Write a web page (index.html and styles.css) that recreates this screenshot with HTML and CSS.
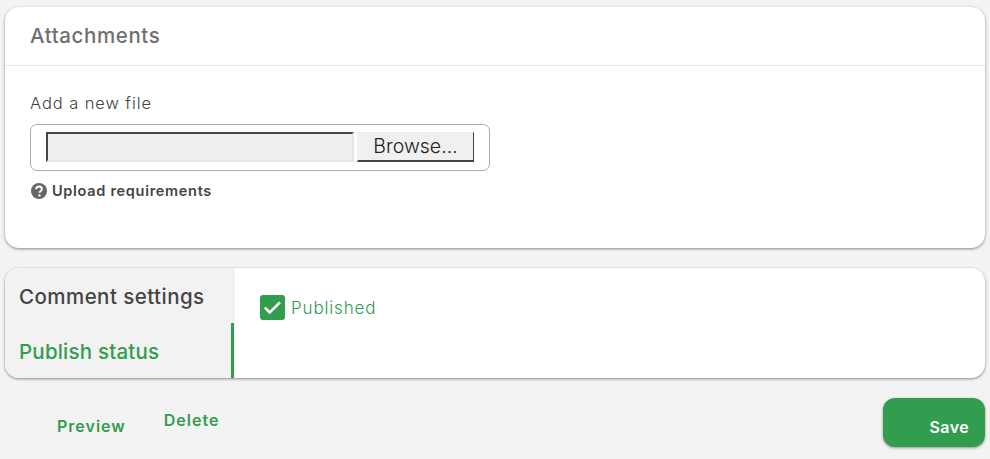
FILE: index.html
```html
<!DOCTYPE html>
<html lang="en">
<head>
<meta charset="utf-8">
<title>Attachments</title>
<link rel="stylesheet" href="styles.css">
</head>
<body>
<section class="card attachments">
  <h2 class="card-title">Attachments</h2>
  <div class="card-body">
    <label class="field-label">Add a new file</label>
    <div class="file-box">
      <span class="file-path"></span>
      <button class="browse" type="button">Browse...</button>
    </div>
    <div class="requirements">
      <svg class="help-icon" viewBox="0 0 16 16" aria-hidden="true">
        <circle cx="8" cy="8" r="8" fill="#666"/>
        <path d="M5.2 6.2C5.3 4.5 6.5 3.5 8 3.5c1.7 0 2.9 1 2.9 2.5 0 1.1-.7 1.7-1.4 2.2-.7.4-1 .8-1 1.6" fill="none" stroke="#fff" stroke-width="1.9"/>
        <circle cx="8.4" cy="12.4" r="1.2" fill="#fff"/>
      </svg>
      <span>Upload requirements</span>
    </div>
  </div>
</section>
<section class="card settings">
  <nav class="tabs">
    <div class="tab">Comment settings</div>
    <div class="tab tab-active">Publish status</div>
  </nav>
  <div class="tab-panel">
    <span class="checkbox">
      <svg viewBox="0 0 25 25" aria-hidden="true"><path d="M4.8 12.6l4.9 4.9L20 7.4" fill="none" stroke="#fff" stroke-width="2.6"/></svg>
    </span>
    <span class="check-label">Published</span>
  </div>
</section>
<footer class="actions">
  <a class="link link-preview">Preview</a>
  <a class="link link-delete">Delete</a>
  <button class="save" type="button">Save</button>
</footer>
</body>
</html>
```
FILE: styles.css
```css
* { box-sizing: border-box; }
html, body { margin: 0; height: 459px; overflow: hidden; }
body {
  background: #f3f3f3;
  padding: 7px 5px 0;
  font-family: Inter, "Open Sans", sans-serif;
  color: #444;
}
.card {
  background: #fff;
  border-radius: 14px;
  box-shadow: 0 1px 3px rgba(0,0,0,.45);
}
.attachments { height: 241px; }
.card-title {
  margin: 0;
  height: 59px;
  padding: 16px 25px 0;
  border-bottom: 1px solid #e6e6e6;
  font-size: 20.5px;
  line-height: 25px;
  font-weight: 500;
  letter-spacing: .6px;
  color: #707070;
}
.card-body { padding: 27px 25px 0; }
.field-label {
  display: block;
  font-size: 16.5px;
  line-height: 20px;
  font-weight: 300;
  color: #444;
  margin-bottom: 11px;
  letter-spacing: .9px;
}
.file-box {
  width: 460px;
  height: 47px;
  border: 1px solid #aaa;
  border-radius: 7px;
  padding: 7px 15px;
  display: flex;
  gap: 3px;
}
.file-path {
  width: 308px;
  height: 30px;
  background: #efefef;
  border-style: solid;
  border-width: 2px;
  border-color: #444 #e4e4e4 #e4e4e4 #444;
}
.browse {
  width: 117px;
  height: 30px;
  padding: 0 0 2px;
  background: #f0f0f0;
  border-style: solid;
  border-width: 1px 1px 2px 1px;
  border-color: #f0f0f0 #444 #444 #f0f0f0;
  font: 300 19.5px/26px Inter, sans-serif;
  color: #222;
}
.requirements {
  display: flex;
  align-items: center;
  gap: 5px;
  margin-top: 11px;
  margin-left: 1px;
  font-size: 14.5px;
  line-height: 18px;
  font-weight: 600;
  letter-spacing: .7px;
  color: #444;
}
.help-icon { width: 16px; height: 16px; }
.settings {
  height: 110px;
  margin-top: 20px;
  display: flex;
  overflow: hidden;
}
.tabs { width: 230px; background: #f2f2f2; }
.tab {
  width: 229px;
  height: 55px;
  padding: 16px 14px 0;
  font-size: 20.5px;
  line-height: 25px;
  font-weight: 500;
  letter-spacing: .45px;
  color: #444;
}
.tab-active {
  color: #329c4f;
  border-right: 3px solid #329c4f;
  letter-spacing: .2px;
}
.tab-panel {
  flex: 1;
  display: flex;
  align-items: flex-start;
  gap: 6px;
  padding: 27px 25px 0;
}
.checkbox {
  width: 25px;
  height: 25px;
  background: #329c4f;
  border-radius: 3px;
  display: block;
}
.checkbox svg { display: block; width: 25px; height: 25px; }
.check-label {
  font-size: 17px;
  line-height: 25px;
  font-weight: 300;
  color: #329c4f;
  letter-spacing: .85px;
  padding-top: 1px;
}
.actions {
  display: flex;
  align-items: flex-start;
  margin-top: 20px;
}
.link {
  font-size: 16px;
  line-height: 20px;
  font-weight: 600;
  letter-spacing: 1px;
  color: #329c4f;
}
.link-preview { margin: 18px 0 0 52px; }
.link-delete { margin: 12px 0 0 38px; }
.save {
  margin-left: auto;
  width: 102px;
  height: 49px;
  border: 0;
  border-radius: 12px;
  background: #329c4f;
  box-shadow: 0 1px 3px rgba(0,0,0,.4);
  color: #fff;
  font: 600 16px/20px Inter, sans-serif;
  letter-spacing: .4px;
  text-align: right;
  padding: 8px 16px 0 0;
}
```
